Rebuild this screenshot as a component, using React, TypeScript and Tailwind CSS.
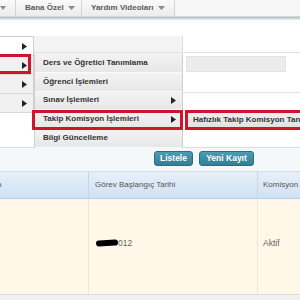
import React from "react";

const Arrow = () => (
  <svg width="5" height="7" viewBox="0 0 5 7" className="block shrink-0">
    <path d="M0 0 L5 3.5 L0 7 Z" fill="#222" />
  </svg>
);

const Caret = () => (
  <svg width="7" height="4" viewBox="0 0 7 4" className="inline-block ml-[4px] shrink-0">
    <path d="M0 0 L7 0 L3.5 4 Z" fill="#8a8a8a" />
  </svg>
);

export default function App() {
  const arial = { fontFamily: '"Liberation Sans", Arial, sans-serif' };
  const l2 = [
    "Ders ve Öğretici Tanımlama",
    "Öğrenci İşlemleri",
    "Sınav İşlemleri",
    "Takip Komisyon İşlemleri",
    "Bilgi Güncelleme",
  ];
  return (
    <div className="relative w-[300px] h-[300px] overflow-hidden bg-white flex flex-col" style={arial}>
      {/* nav bar */}
      <div className="shrink-0 flex h-[17px] bg-gradient-to-b from-[#fafafa] to-[#ececec] border-b border-[#d6d6d6] text-[8px] font-bold text-[#5a5a5a]">
        <div className="w-[16px] flex items-center justify-start border-r border-[#d4d4d4]">
          <svg width="6" height="4" viewBox="0 0 6 4">
            <path d="M0 0 L6 0 L3 4 Z" fill="#8a8a8a" />
          </svg>
        </div>
        <div className="w-[66px] flex items-center pl-[9px] border-r border-[#d4d4d4]">
          Bana Özel<Caret />
        </div>
        <div className="w-[93px] flex items-center pl-[9px] border-r border-[#d4d4d4]">
          Yardım Videoları<Caret />
        </div>
        <div className="flex-1 bg-[#f6f6f6]" />
      </div>
      <div className="shrink-0 h-[3px] bg-gradient-to-b from-[#9fc4c4] to-[#eef5f5]" />
      <div className="shrink-0 h-[16px] bg-white" />
      {/* form rows */}
      <div className="shrink-0 flex flex-col">
        <div className="flex h-[17px] border-b border-[#e2e2e2]">
          <div className="w-[183px] bg-[#f3f3f3] border-r border-[#e0e0e0]" />
          <div className="flex-1 bg-white" />
        </div>
        <div className="flex h-[40px] border-b border-[#e6e6e6]">
          <div className="w-[183px] bg-[#f3f3f3] border-r border-[#e0e0e0]" />
          <div className="flex-1 bg-white pt-[3px] pl-[3px]">
            <div className="w-[100px] h-[16px] bg-[#ececec] border border-[#e2e2e2]" />
          </div>
        </div>
        <div className="flex h-[54px]">
          <div className="w-[183px] bg-white border-r border-[#e0e0e0]" />
          <div className="flex-1 bg-white" />
        </div>
      </div>
      {/* buttons bar */}
      <div className="shrink-0 h-[25px] bg-[#f5f8fb] border-t border-[#dcdcdc] border-b border-[#c9d3dc] flex items-center gap-[6px] pl-[154px] pb-[2px]">
        <div className="w-[39px] h-[15px] flex items-center justify-center rounded-[3px] bg-gradient-to-b from-[#4a9db3] to-[#2f7f95] border border-[#276f83] text-white text-[8.5px] font-bold">
          Listele
        </div>
        <div className="w-[55px] h-[15px] flex items-center justify-center rounded-[3px] bg-gradient-to-b from-[#4a9db3] to-[#2f7f95] border border-[#276f83] text-white text-[8.5px] font-bold">
          Yeni Kayıt
        </div>
      </div>
      {/* table header */}
      <div className="shrink-0 flex h-[27px] bg-gradient-to-b from-[#e6f0fa] to-[#cfe1f3] border-b border-[#bcd0e4] text-[8px] text-[#555]">
        <div className="w-[89px] flex items-center border-r border-[#c6d6e6] overflow-hidden">
          <span className="-ml-[3px]">o</span>
        </div>
        <div className="w-[169px] flex items-center pl-[6px] border-r border-[#c6d6e6]">
          Görev Başlangıç Tarihi
        </div>
        <div className="flex-1 flex items-center pl-[5px] whitespace-nowrap overflow-hidden">Komisyon</div>
      </div>
      {/* table body */}
      <div className="shrink-0 flex h-[96px] bg-[#fff7e8] border-b border-[#dedede] text-[8.5px] leading-[12px] text-[#666]">
        <div className="w-[89px] border-r border-[#efe6d6]" />
        <div className="w-[169px] flex items-start pt-[38px] pl-[7px] border-r border-[#efe6d6]">
          <span className="inline-block w-[22px] h-[6px] mt-[3px] bg-black rounded-[3px] -rotate-3" />
          <span>012</span>
        </div>
        <div className="flex-1 flex items-start pt-[38px] pl-[5px]">Aktif</div>
      </div>
      <div className="flex-1 bg-[#eef0f2]" />

      {/* level-1 menu */}
      <div className="absolute left-0 top-[36px] w-[34px] flex flex-col border-r border-t border-[#cfcfcf]">
        {[0, 1, 2, 3].map((i) => (
          <div
            key={i}
            className={`h-[19px] flex items-center justify-end pr-[6px] border-b border-[#dadada] ${i === 0 ? "bg-white" : "bg-[#f1f1f1]"}`}
          >
            <Arrow />
          </div>
        ))}
        <div className="absolute left-[-3px] top-[17px] w-[34px] h-[20px] border-[3px] border-[#d0142c]" />
      </div>

      {/* level-2 menu */}
      <div className="absolute left-[34px] top-[54px] w-[149px] flex flex-col border-l border-r border-[#cfcfcf] text-[8px] font-bold text-[#333]">
        {l2.map((t, i) => (
          <div
            key={t}
            className="h-[18.8px] flex items-center justify-between pl-[8px] pr-[6px] bg-gradient-to-b from-[#f3f3f3] to-[#e7e7e7] border-b border-[#fafafa] whitespace-nowrap"
          >
            <span>{t}</span>
            {(i === 2 || i === 3) && <Arrow />}
          </div>
        ))}
        <div className="absolute left-[-3px] top-[56px] w-[151px] h-[20px] border-[3px] border-[#d0142c]" />
      </div>

      {/* level-3 menu */}
      <div className="absolute left-[185px] top-[110px] w-[130px] h-[20px] border-[3px] border-[#d0142c] bg-gradient-to-b from-[#eeeeee] to-[#e2e2e2] flex items-center pl-[5px] text-[8px] font-bold text-[#333] whitespace-nowrap overflow-hidden">
        <span>Hafızlık Takip Komisyon Tanımlama</span>
      </div>
    </div>
  );
}
